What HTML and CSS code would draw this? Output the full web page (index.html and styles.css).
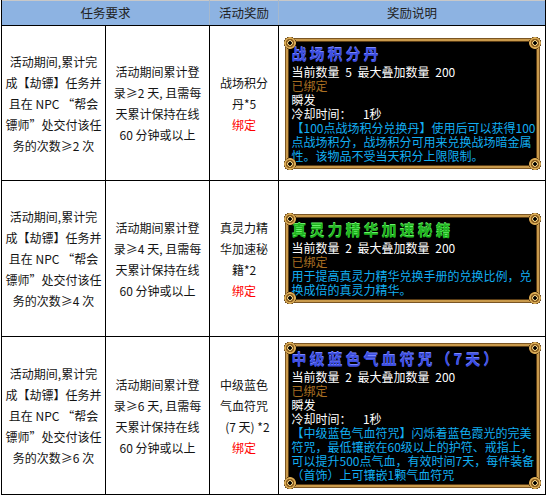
FILE: index.html
```html
<!DOCTYPE html>
<html lang="zh-CN">
<head>
<meta charset="utf-8">
<title>活动奖励</title>
<link rel="stylesheet" href="styles.css">
</head>
<body>
<div class="wrap">
<table class="reward">
  <colgroup>
    <col class="c1"><col class="c2"><col class="c3"><col class="c4">
  </colgroup>
  <thead>
    <tr class="head">
      <th colspan="2">任务要求</th>
      <th>活动奖励</th>
      <th>奖励说明</th>
    </tr>
  </thead>
  <tbody>
    <tr class="r1">
      <td>活动期间,累计完<br>成【劫镖】任务并<br>且在 NPC “帮会<br>镖师”处交付该任<br>务的次数≥2 次</td>
      <td>活动期间累计登<br>录≥2 天, 且需每<br>天累计保持在线<br>60 分钟或以上</td>
      <td>战场积分<br>丹*5<br><span class="bind">绑定</span></td>
      <td class="desc">
        <div class="tip">
          <div class="title blue">战场积分丹</div>
          <div class="ln w">当前数量 5 最大叠加数量 200</div>
          <div class="ln b">已绑定</div>
          <div class="ln w">瞬发</div>
          <div class="ln w">冷却时间：&nbsp;&nbsp;1秒</div>
          <div class="ln c">【100点战场积分兑换丹】使用后可以获得100</div>
          <div class="ln c">点战场积分，战场积分可用来兑换战场暗金属</div>
          <div class="ln c">性。该物品不受当天积分上限限制。</div>
          <i class="cn tl"></i><i class="cn tr"></i><i class="cn bl"></i><i class="cn br"></i>
        </div>
      </td>
    </tr>
    <tr class="r2">
      <td>活动期间,累计完<br>成【劫镖】任务并<br>且在 NPC “帮会<br>镖师”处交付该任<br>务的次数≥4 次</td>
      <td>活动期间累计登<br>录≥4 天, 且需每<br>天累计保持在线<br>60 分钟或以上</td>
      <td>真灵力精<br>华加速秘<br>籍*2<br><span class="bind">绑定</span></td>
      <td class="desc">
        <div class="tip">
          <div class="title green">真灵力精华加速秘籍</div>
          <div class="ln w">当前数量 2 最大叠加数量 200</div>
          <div class="ln b">已绑定</div>
          <div class="ln c">用于提高真灵力精华兑换手册的兑换比例，兑</div>
          <div class="ln c">换成倍的真灵力精华。</div>
          <i class="cn tl"></i><i class="cn tr"></i><i class="cn bl"></i><i class="cn br"></i>
        </div>
      </td>
    </tr>
    <tr class="r3">
      <td>活动期间,累计完<br>成【劫镖】任务并<br>且在 NPC “帮会<br>镖师”处交付该任<br>务的次数≥6 次</td>
      <td>活动期间累计登<br>录≥6 天, 且需每<br>天累计保持在线<br>60 分钟或以上</td>
      <td>中级蓝色<br>气血符咒<br><span class="nw">&nbsp;(7 天) *2</span><br><span class="bind">绑定</span></td>
      <td class="desc">
        <div class="tip">
          <div class="title blue">中级蓝色气血符咒（7天）</div>
          <div class="ln w">当前数量 2 最大叠加数量 200</div>
          <div class="ln b">已绑定</div>
          <div class="ln w">瞬发</div>
          <div class="ln w">冷却时间：&nbsp;&nbsp;1秒</div>
          <div class="ln c">【中级蓝色气血符咒】闪烁着蓝色霞光的完美</div>
          <div class="ln c">符咒，最低镶嵌在60级以上的护符、戒指上，</div>
          <div class="ln c">可以提升500点气血，有效时间7天，每件装备</div>
          <div class="ln c">（首饰）上可镶嵌1颗气血符咒</div>
          <i class="cn tl"></i><i class="cn tr"></i><i class="cn bl"></i><i class="cn br"></i>
        </div>
      </td>
    </tr>
  </tbody>
</table>
</div>
</body>
</html>
```

FILE: styles.css
```css
html, body {
  margin: 0;
  padding: 0;
  background: #ffffff;
}
.wrap {
  padding: 0 0 0 1px;
}
.reward {
  border-collapse: collapse;
  table-layout: fixed;
  width: 544px;
  font-family: "Noto Sans CJK SC", "Microsoft YaHei", sans-serif;
  font-size: 12px;
  color: #141414;
  border-top: 1px solid #c8c8c8;
}
.c1 { width: 104px; }
.c2 { width: 104px; }
.c3 { width: 69px; }
.c4 { width: 267px; }

.head th {
  background: #8db3e2;
  height: 24px;
  padding: 0;
  font-weight: normal;
  font-size: 12.5px;
  color: #222;
  border-left: 1px solid #a6b8cc;
  border-right: 1px solid #a6b8cc;
  border-bottom: 1px solid #000;
  text-align: center;
  vertical-align: middle;
  line-height: 24px;
}
.head th:first-child { border-left: 1px solid #000; }
.head th:last-child { border-right: 1px solid #000; }

.reward td {
  border: 1px solid #000;
  padding: 0;
  text-align: center;
  vertical-align: middle;
  line-height: 21px;
  white-space: nowrap;
  overflow: visible;
}
.r1 td { height: 154px; }
.r2 td { height: 155px; }
.r3 td { height: 157px; }

.bind { color: #ff0000; }
.nw { position: relative; left: 2px; }

.reward td.desc {
  padding: 0 6px 0 6px;
}

.tip {
  position: relative;
  margin: 0 auto;
  width: 253px;
  box-sizing: border-box;
  background: #000000;
  border: 2px solid #c99a4c;
  box-shadow: 0 0 0 1px #7a5524, inset 0 0 0 1px #5a3c14;
  padding: 2px 4px 3px 4px;
  text-align: left;
  font-family: "Noto Sans CJK SC", "WenQuanYi Zen Hei", sans-serif;
  font-size: 12px;
  line-height: 14px;
}
.title {
  font-size: 15px;
  font-weight: bold;
  letter-spacing: 3px;
  line-height: 22px;
  height: 22px;
}
.title.blue {
  color: #3d4ee0;
  text-shadow: 0 -1px 0 #7a88ff;
}
.title.green {
  color: #1fb51f;
  text-shadow: 0 -1px 0 #6bf06b;
}
.ln { white-space: nowrap; height: 14px; }
.ln.w { color: #ffffff; word-spacing: 3px; }
.ln.b { color: #a86f22; }
.ln.c { color: #12aef2; }

.cn {
  position: absolute;
  width: 12px;
  height: 12px;
  background:
    radial-gradient(circle at 50% 50%, #000 0 1.5px, transparent 2px),
    radial-gradient(circle at 50% 50%, #f2d487 0 2.5px, #8a5c1e 3px 4px, #d9ab55 4.5px 5.5px, #5a3a10 6px, transparent 6.5px);
}
.cn.tl { top: -4px; left: -4px; }
.cn.tr { top: -4px; right: -4px; }
.cn.bl { bottom: -4px; left: -4px; }
.cn.br { bottom: -4px; right: -4px; }
```
